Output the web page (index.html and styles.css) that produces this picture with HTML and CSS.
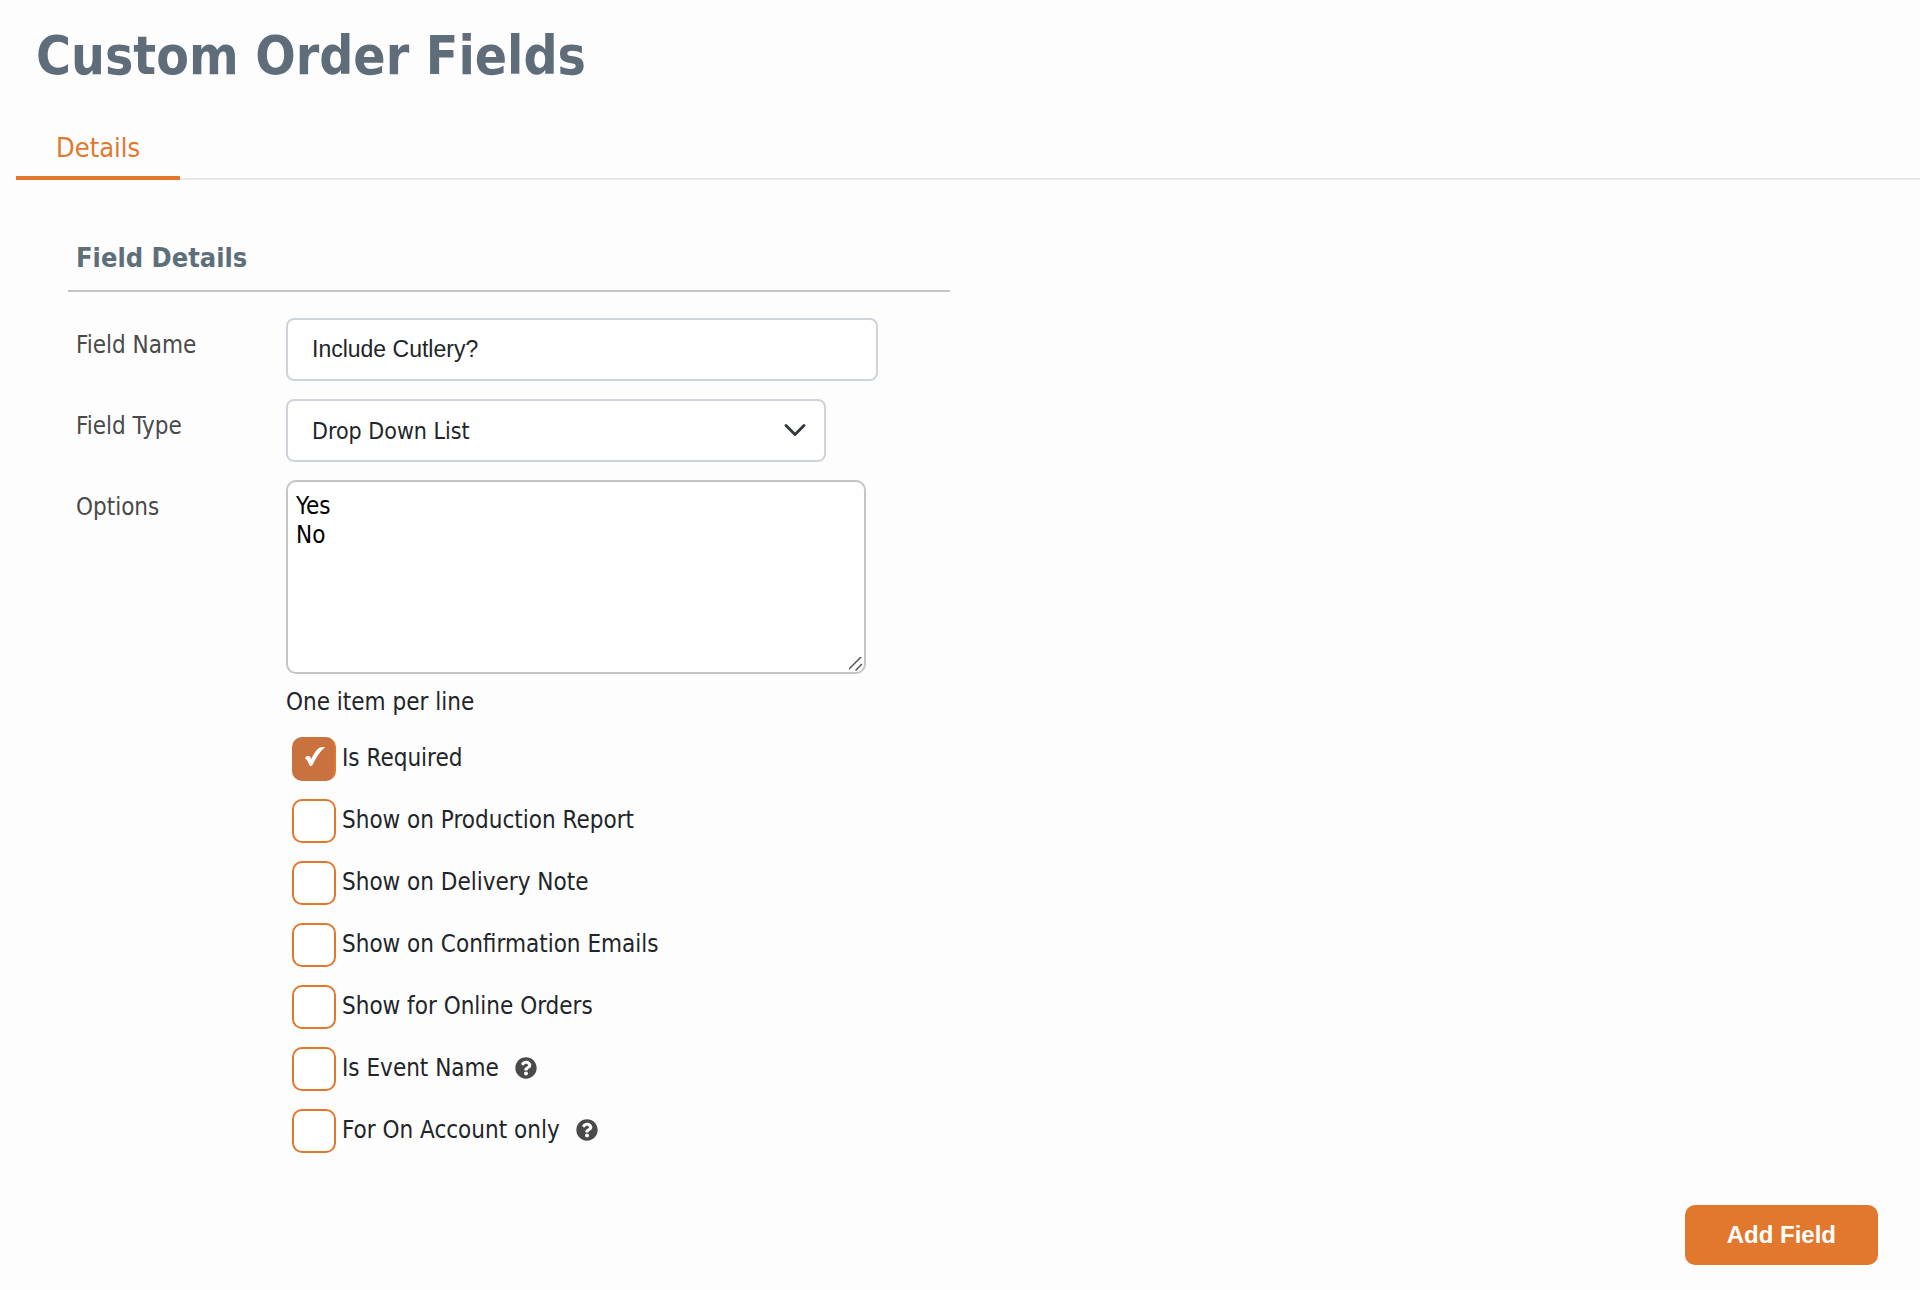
FILE: index.html
```html
<!DOCTYPE html>
<html lang="en">
<head>
    <meta charset="UTF-8">
    <meta name="viewport" content="width=device-width, initial-scale=1.0">
    <title>Custom Order Fields</title>
    <link rel="stylesheet" href="styles.css">
</head>
<body>

    <h1>Custom Order Fields</h1>

    <nav class="tabs">
        <a href="#details" class="tab active">Details</a>
    </nav>

    <form action="/custom_fields" method="post">
        <section class="panel" id="details">
            <h2>Field Details</h2>

            <div class="row">
                <label class="name" for="fieldName">Field Name</label>
                <div class="control">
                    <input type="text" id="fieldName" name="fieldName" value="Include Cutlery?">
                </div>
            </div>

            <div class="row">
                <label class="name" for="fieldType">Field Type</label>
                <div class="control">
                    <select id="fieldType" name="fieldType">
                        <option>Drop Down List</option>
                    </select>
                </div>
            </div>

            <div class="row">
                <label class="name" for="options">Options</label>
                <div class="control">
                    <textarea id="options" name="options">Yes
No</textarea>
                    <p class="hint">One item per line</p>

                    <div class="checks">
                        <div class="check">
                            <input type="checkbox" id="required" name="required" checked>
                            <label for="required">Is Required</label>
                        </div>
                        <div class="check">
                            <input type="checkbox" id="production" name="production">
                            <label for="production">Show on Production Report</label>
                        </div>
                        <div class="check">
                            <input type="checkbox" id="delivery" name="delivery">
                            <label for="delivery">Show on Delivery Note</label>
                        </div>
                        <div class="check">
                            <input type="checkbox" id="emails" name="emails">
                            <label for="emails">Show on Confirmation Emails</label>
                        </div>
                        <div class="check">
                            <input type="checkbox" id="online" name="online">
                            <label for="online">Show for Online Orders</label>
                        </div>
                        <div class="check">
                            <input type="checkbox" id="eventName" name="eventName">
                            <label for="eventName">Is Event Name</label>
                            <button type="button" class="help" aria-label="Help">
                                <svg viewBox="0 0 512 512"><path d="M504 256c0 137-111 248-248 248S8 393 8 256 119 8 256 8s248 111 248 248zM262.700 90c-54.500 0-89.300 23-116.500 63.800-3.500 5.300-2.400 12.400 2.700 16.300l34.700 26.300c5.200 3.900 12.600 3 16.700-2.100 17.900-22.700 30.100-35.800 57.300-35.800 20.400 0 45.700 13.100 45.700 33 0 15-12.400 22.700-32.500 34C247.100 238.500 216 254.900 216 296v4c0 6.600 5.400 12 12 12h56c6.600 0 12-5.400 12-12v-1.300c0-28.500 83.200-29.600 83.200-106.700 0-58-60.200-102-116.500-102zM256 338c-25.400 0-46 20.600-46 46s20.600 46 46 46 46-20.600 46-46-20.600-46-46-46z"/></svg>
                            </button>
                        </div>
                        <div class="check">
                            <input type="checkbox" id="onAccount" name="onAccount">
                            <label for="onAccount">For On Account only</label>
                            <button type="button" class="help" aria-label="Help">
                                <svg viewBox="0 0 512 512"><path d="M504 256c0 137-111 248-248 248S8 393 8 256 119 8 256 8s248 111 248 248zM262.700 90c-54.500 0-89.300 23-116.500 63.800-3.500 5.300-2.400 12.400 2.700 16.300l34.700 26.300c5.200 3.900 12.600 3 16.700-2.100 17.900-22.700 30.100-35.800 57.300-35.800 20.400 0 45.700 13.100 45.700 33 0 15-12.400 22.700-32.500 34C247.100 238.500 216 254.900 216 296v4c0 6.600 5.400 12 12 12h56c6.600 0 12-5.400 12-12v-1.300c0-28.500 83.200-29.600 83.200-106.700 0-58-60.200-102-116.500-102zM256 338c-25.400 0-46 20.600-46 46s20.600 46 46 46 46-20.600 46-46-20.600-46-46-46z"/></svg>
                            </button>
                        </div>
                    </div>
                </div>
            </div>
        </section>

        <div class="actions">
            <button type="submit" class="add">Add Field</button>
        </div>
    </form>

</body>
</html>
```
FILE: styles.css
```css
body {
    font-family: Tahoma, "DejaVu Sans Condensed", "DejaVu Sans", sans-serif;
    font-size: 24px;
    line-height: 36px;
    margin: 0;
    color: #212529;
    background-color: #fdfdfd;
}
h1 {
    margin: 0;
    padding: 20px 36px;
    font-size: 53px;
    line-height: 72px;
    color: #5f6d7a;
}
.tabs {
    display: flex;
    margin-left: 16px;
    box-shadow: inset 0 -2px #e8e8e8;
}
.tab {
    padding: 18px 40px 10px;
    border-bottom: 4px solid #e2772e;
    font-size: 27px;
    color: #e2772e;
    text-decoration: none;
}
.panel {
    box-sizing: border-box;
    width: 50%;
    padding: 60px 10px 0 68px;
}
h2 {
    margin: 0 0 26px;
    padding: 0 8px 14px;
    border-bottom: 2px solid #c4c4c4;
    font-size: 27px;
    color: #5f6f7a;
}
.row {
    display: flex;
    margin-bottom: 18px;
}
.name {
    box-sizing: border-box;
    flex: 0 0 218px;
    padding: 9px 8px 0;
    color: #4a4a4a;
}
.control {
    flex: 1;
}
input[type="text"], select, textarea {
    display: block;
    box-sizing: border-box;
    width: 100%;
    border: 2px solid #ced4da;
    border-radius: 8px;
    background-color: #fff;
    color: #212529;
    font-size: 24px;
}
input[type="text"], select {
    height: 63px;
    padding: 0 24px;
    font-size: 23px;
}
input[type="text"] {
    max-width: 592px;
    font-family: Arial, "Liberation Sans", sans-serif;
}
select {
    max-width: 540px;
    font-family: inherit;
    appearance: none;
    background-image: url("data:image/svg+xml,%3Csvg xmlns='http://www.w3.org/2000/svg' viewBox='0 0 16 16'%3E%3Cpath fill='none' stroke='%23343a40' stroke-linecap='round' stroke-linejoin='round' stroke-width='2' d='M2 5l6 6 6-6'/%3E%3C/svg%3E");
    background-repeat: no-repeat;
    background-position: right 17px top 17px;
    background-size: 24px 24px;
}
textarea {
    max-width: 580px;
    height: 194px;
    padding: 10px 8px;
    border-color: #c4c4c4;
    border-radius: 10px;
    color: #000;
    font-family: inherit;
    line-height: 29px;
}
textarea::-webkit-scrollbar {
    width: 18px;
    height: 18px;
}
textarea::-webkit-resizer {
    background: url("data:image/svg+xml,%3Csvg xmlns='http://www.w3.org/2000/svg' width='18' height='18' viewBox='0 0 18 18'%3E%3Cpath fill='none' stroke='%23555' stroke-width='1.500' d='M1.500 16.500L16 2M9.500 16.500L16 10'/%3E%3C/svg%3E") no-repeat right bottom;
}
.hint {
    margin: 10px 0 17px;
}
.checks {
    display: flex;
    flex-direction: column;
    gap: 18px;
    padding-left: 6px;
}
.check {
    display: flex;
    align-items: center;
    gap: 6px;
}
.check label {
    padding-bottom: 2px;
}
input[type="checkbox"] {
    flex: none;
    width: 44px;
    height: 44px;
    margin: 0;
    border: 2px solid #e2772e;
    border-radius: 10px;
    background-color: #fff;
    appearance: none;
}
input[type="checkbox"]:checked {
    border-color: #c9713f;
    border-right-color: #e2772e;
    background: #c9713f url("data:image/svg+xml,%3Csvg xmlns='http://www.w3.org/2000/svg' viewBox='0 0 20 20'%3E%3Cpath fill='%23fff' d='M0 11C1.500 8.500 4.500 8.500 5.300 10L6.300 12C9 6.500 12 2 14.500.8 16 0 18.500 0 20 .3 15 4.500 11 10.500 7.500 18 6.800 19.500 5 19.500 4.300 18 3.300 15 2 12.500 0 11z'/%3E%3C/svg%3E") no-repeat 11px 8px / 20px 20px;
}
.help {
    width: 22px;
    height: 24px;
    margin-left: 10px;
    padding: 0 0 2px;
    border: none;
    background: none;
    cursor: pointer;
}
.help svg {
    display: block;
    fill: #4a4a4a;
}
.actions {
    display: flex;
    justify-content: flex-end;
    padding: 34px 42px 24px;
}
.add {
    padding: 12px 42px;
    border: none;
    border-radius: 10px;
    background-color: #e2772e;
    color: #fff;
    font: bold 24px/36px Arial, "Liberation Sans", sans-serif;
    cursor: pointer;
}
.add:hover {
    background-color: #c9713f;
}
```
